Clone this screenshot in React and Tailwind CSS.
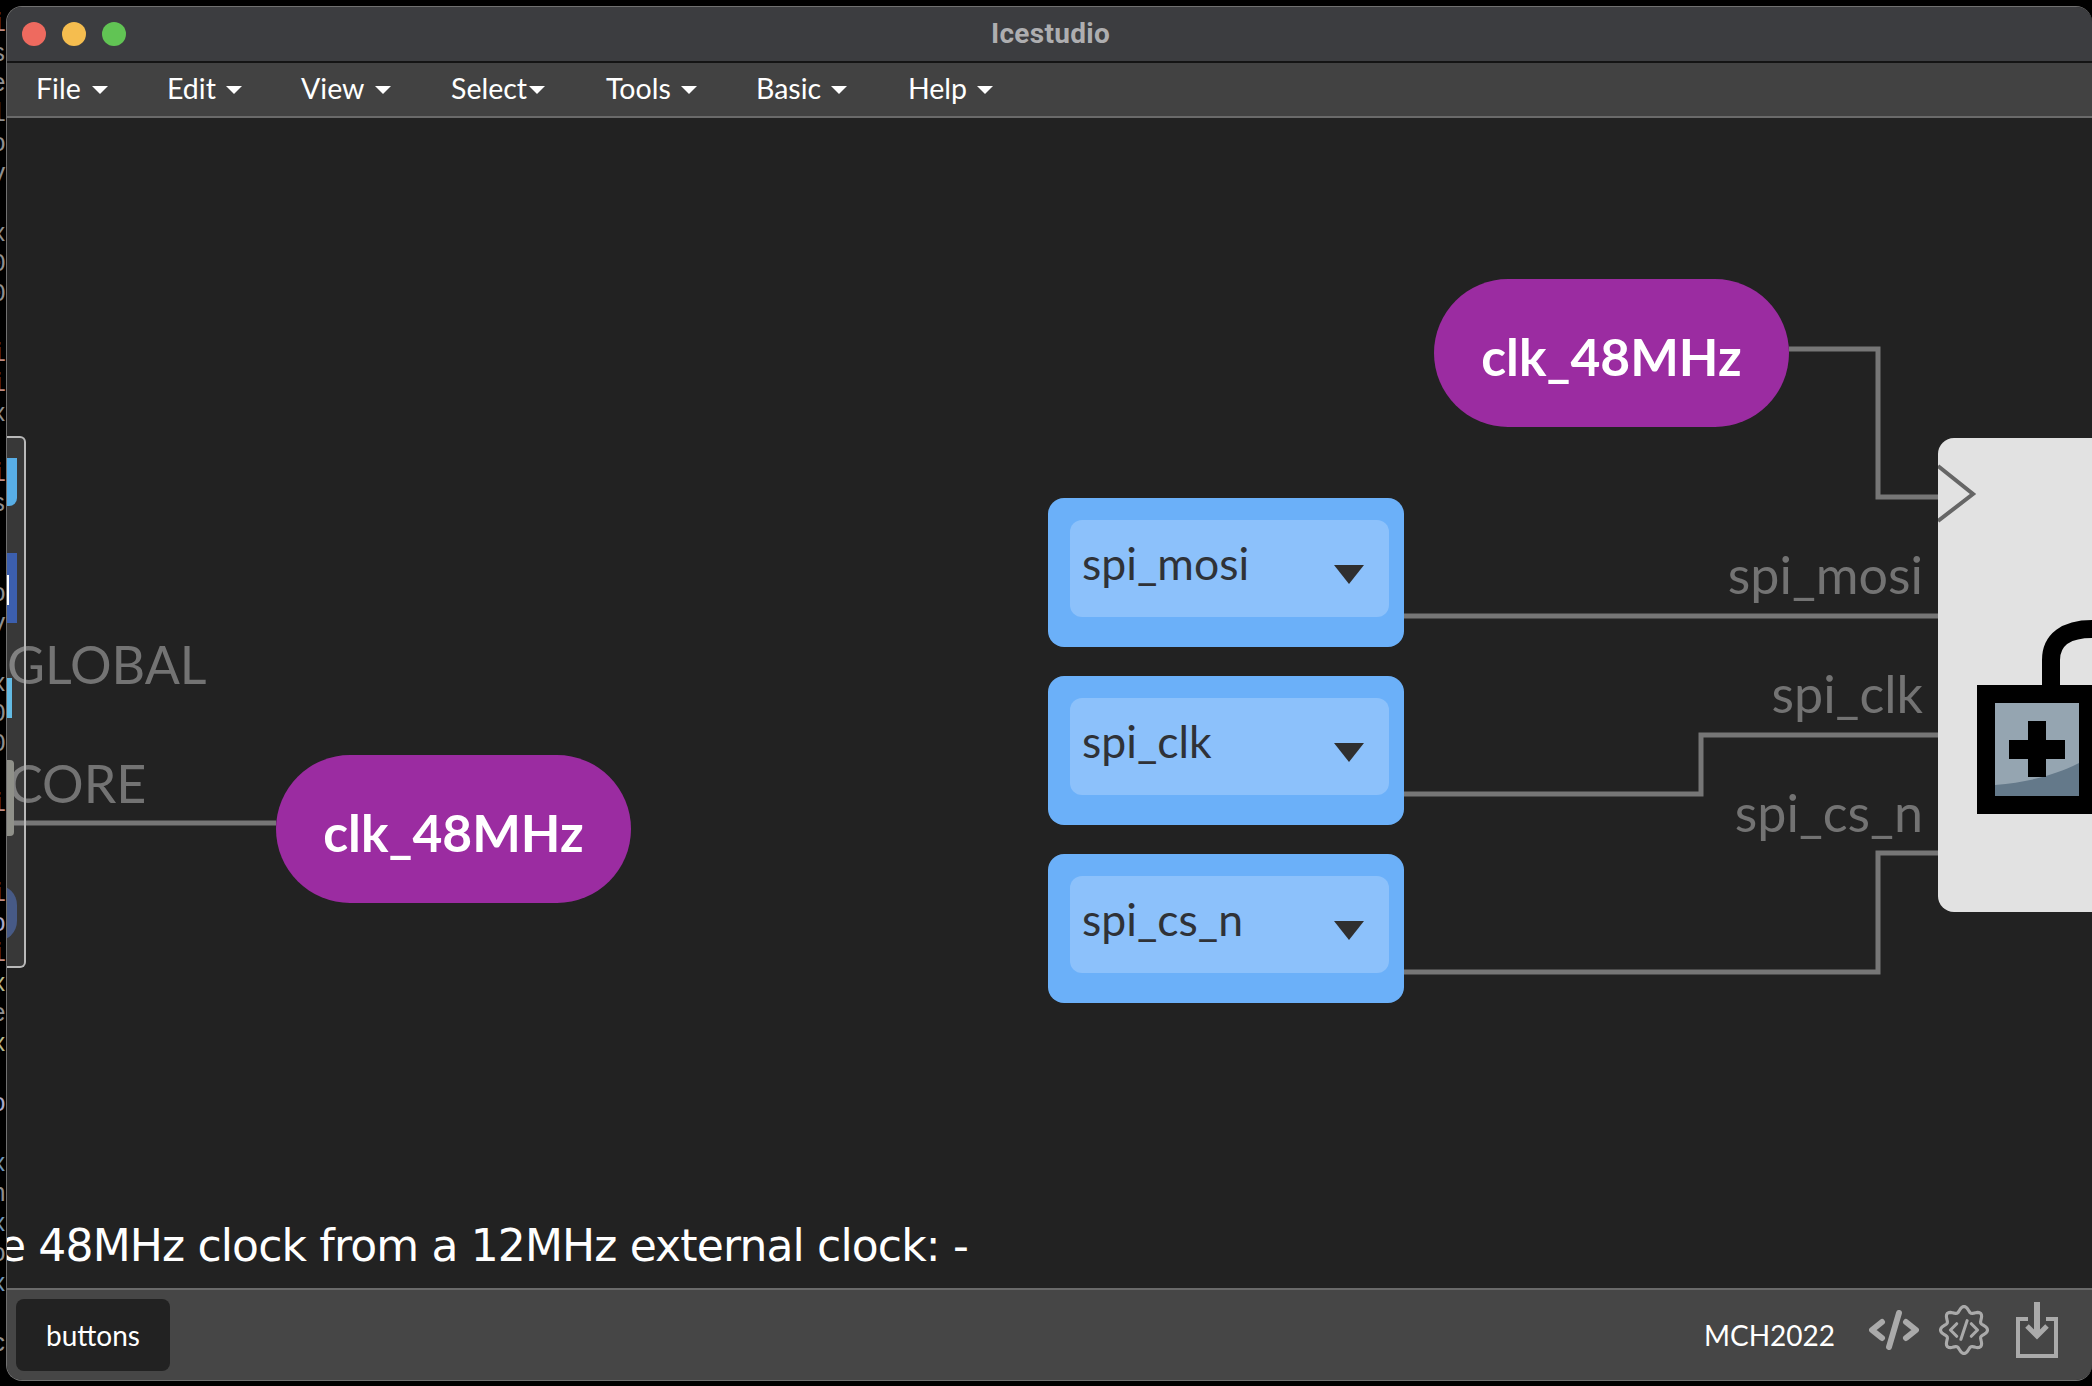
import React from 'react';

const menus = [
  { label: 'File', width: 'w-[131px]', gap: 'ml-[11px]' },
  { label: 'Edit', width: 'w-[134px]', gap: 'ml-[10px]' },
  { label: 'View', width: 'w-[150px]', gap: 'ml-[11px]' },
  { label: 'Select', width: 'w-[155px]', gap: 'ml-[2px]' },
  { label: 'Tools', width: 'w-[150px]', gap: 'ml-[10px]' },
  { label: 'Basic', width: 'w-[152px]', gap: 'ml-[10px]' },
  { label: 'Help', width: 'w-[100px]', gap: 'ml-[10px]' },
];

const inputs = [
  { name: 'spi_mosi', top: 'top-[380px]' },
  { name: 'spi_clk', top: 'top-[558px]' },
  { name: 'spi_cs_n', top: 'top-[736px]' },
];

// what shows of the terminal behind the window, one line per 30px
const termLines = [
  ['i', 'text-[#c08a80]'], ['s', 'text-[#8f8f8f]'], ['e', 'text-[#8f8f8f]'], ['l', 'text-[#8f8f8f]'],
  ['o', 'text-[#8f8f8f]'], ['v', 'text-[#8f8f8f]'], ['', ''], ['x', 'text-[#8f8f8f]'],
  ['0', 'text-[#8f8f8f]'], ['0', 'text-[#8f8f8f]'], ['', ''], ['i', 'text-[#c08a80]'],
  ['i', 'text-[#c08a80]'], ['x', 'text-[#8f8f8f]'], ['', ''], ['i', 'text-[#c08a80]'],
  ['s', 'text-[#8f8f8f]'], ['', ''], ['', ''], ['o', 'text-[#8f8f8f]'],
  ['v', 'text-[#8f8f8f]'], ['', ''], ['x', 'text-[#8f8f8f]'], ['0', 'text-[#8f8f8f]'],
  ['0', 'text-[#8f8f8f]'], ['', ''], ['i', 'text-[#c08a80]'], ['', ''],
  ['', ''], ['i', 'text-[#c08a80]'], ['o', 'text-[#a9a9c9]'], ['i', 'text-[#c08a80]'],
  ['x', 'text-[#b9b98c]'], ['e', 'text-[#8f8f8f]'], ['x', 'text-[#b9b98c]'], ['', ''],
  ['o', 'text-[#a9a9c9]'], ['', ''], ['x', 'text-[#6f95b8]'], ['n', 'text-[#8f8f8f]'],
  ['x', 'text-[#6f95b8]'], ['o', 'text-[#8f8f8f]'], ['x', 'text-[#6f95b8]'], ['', ''],
  ['c', 'text-[#8f8f8f]'], ['', ''],
];

const gearPath = () => {
  const pts = [];
  for (let i = 0; i < 96; i++) {
    const a = (i / 96) * Math.PI * 2;
    const r = 20 + 2.6 * Math.cos(a * 8);
    pts.push(`${(24 + r * Math.sin(a)).toFixed(2)} ${(24 - r * Math.cos(a)).toFixed(2)}`);
  }
  return `M${pts.join('L')}Z`;
};

const Pill = ({ pos }) => (
  <div className={`absolute ${pos} w-[355px] h-[148px] rounded-[74px] bg-[#9b2ca1] flex items-center justify-center pt-[7px]`}>
    <span className="text-white text-[51.5px] font-bold leading-none">clk_48MHz</span>
  </div>
);

const InputBlock = ({ name, top }) => (
  <div className={`absolute left-[1041px] ${top} w-[356px] h-[149px] rounded-[16px] bg-[#6bb0f9] pt-[22px] pl-[22px] pr-[15px]`}>
    <div className="h-[97px] rounded-[12px] bg-[#8cc1fb] pl-[12px] pr-[25px] pt-[21px] flex justify-between">
      <span className="text-[#2f3237] text-[44.5px] leading-none">{name}</span>
      <div className="mt-[24px] w-0 h-0 border-x-[15px] border-x-transparent border-t-[19px] border-t-[#2f2f2f]" />
    </div>
  </div>
);

const Wires = () => (
  <svg className="absolute inset-0" width="2086" height="1170" viewBox="7 118 2086 1170" fill="none" stroke="#767676" strokeWidth="5">
    <path d="M7 823H276" />
    <path d="M1789 349H1878V497H1940" />
    <path d="M1404 616H1940" />
    <path d="M1404 794H1701V735H1940" />
    <path d="M1404 972H1878V853H1940" />
  </svg>
);

const LockBlock = () => (
  <div className="absolute left-[1931px] top-[320px] w-[162px] h-[474px] rounded-l-[16px] bg-[#e2e2e2] overflow-hidden">
    <svg width="162" height="474" viewBox="1938 438 162 474" fill="none">
      <path d="M1938 466L1973 494L1938 521" stroke="#666" strokeWidth="4" />
      <path d="M2051 690V660C2051 640 2066 629 2092 629" stroke="#000" strokeWidth="18" />
      <rect x="1977" y="685" width="130" height="129" fill="#000" />
      <rect x="1995" y="703" width="84" height="93" fill="#95a5b1" />
      <path d="M1995 785C2030 782 2055 775 2079 763V796H1995Z" fill="#64798a" />
      <path d="M2028 721H2046V740H2065V759H2046V777H2028V759H2009V740H2028Z" fill="#000" />
    </svg>
  </div>
);

const Dock = () => (
  <div className="absolute left-0 top-[318px] w-[19px] h-[532px] rounded-r-[6px] border-2 border-l-0 border-[#b9b9b9] bg-white/10 overflow-hidden">
    <div className="absolute top-[20px] left-0 w-[10px] h-[48px] bg-[#58aee6] rounded-br-[8px]" />
    <div className="absolute top-[115px] left-0 w-[10px] h-[70px] bg-[#3c5fae]">
      <div className="mt-[22px] w-[2px] h-[30px] bg-white" />
    </div>
    <div className="absolute top-[240px] left-0 w-[5px] h-[40px] bg-[#63bbe4]" />
    <div className="absolute top-[322px] left-0 w-[7px] h-[76px] rounded-r-[4px] bg-[#8f9089]" />
    <div className="absolute top-[447px] left-[-30px] w-[40px] h-[56px] rounded-full bg-[#475a86]" />
  </div>
);

export default function App() {
  return (
    <div className="relative w-[2092px] h-[1386px] bg-black overflow-hidden pl-[6px] pt-[6px] font-['Lato',sans-serif]">
      <div className="absolute left-0 top-[10px] w-[6px] overflow-hidden flex flex-col items-end font-['Liberation_Mono',monospace] text-[25px]">
        {termLines.map(([ch, color], i) => (
          <div key={i} className={`h-[30px] w-[15px] shrink-0 leading-[30px] text-center ${color}`}>{ch}</div>
        ))}
      </div>

      <div className="relative w-[2086px] h-[1375px] rounded-[16px] overflow-hidden flex flex-col bg-[#222222] border-t border-l border-b border-[#707070]">
        <div className="h-[56px] shrink-0 bg-[#3c3d40] border-b-2 border-[#141414] relative flex items-center justify-center">
          <div className="absolute left-[15px] top-[15px] flex gap-[16px]">
            <div className="w-[24px] h-[24px] rounded-full bg-[#ee6a5f]" />
            <div className="w-[24px] h-[24px] rounded-full bg-[#f5bd4f]" />
            <div className="w-[24px] h-[24px] rounded-full bg-[#61c454]" />
          </div>
          <span className="ml-[2px] text-[#aeaeb0] text-[28px] font-bold tracking-[0.3px] font-['Roboto',sans-serif]">Icestudio</span>
        </div>

        <div className="h-[55px] shrink-0 bg-[#424242] border-b-2 border-[#6a6a6a] pl-[29px] pb-[2px] flex items-center">
          {menus.map((m) => (
            <div key={m.label} className={`${m.width} flex items-center text-white text-[28.5px]`}>
              <span>{m.label}</span>
              <div className={`${m.gap} mt-[3px] w-0 h-0 border-x-[8px] border-x-transparent border-t-[8px] border-t-white`} />
            </div>
          ))}
        </div>

        <div className="relative flex-1 overflow-hidden">
          <Wires />
          <span className="absolute left-0 top-[520px] text-[#737373] text-[52px] leading-none">GLOBAL</span>
          <span className="absolute left-[1px] top-[639px] text-[#737373] text-[52px] leading-none">CORE</span>
          <Pill pos="left-[269px] top-[637px]" />
          <Pill pos="left-[1427px] top-[161px]" />
          {inputs.map((b) => (
            <InputBlock key={b.name} name={b.name} top={b.top} />
          ))}
          <span className="absolute right-[169px] top-[430px] text-[#737373] text-[52px] leading-none">spi_mosi</span>
          <span className="absolute right-[169px] top-[549px] text-[#737373] text-[52px] leading-none">spi_clk</span>
          <span className="absolute right-[169px] top-[668px] text-[#737373] text-[52px] leading-none">spi_cs_n</span>
          <LockBlock />
          <span className="absolute left-[-8px] top-[1106px] whitespace-nowrap text-white text-[44px] tracking-[-0.85px] leading-none font-['DejaVu_Sans',sans-serif]">e 48MHz clock from a 12MHz external clock: -</span>
          <Dock />
        </div>

        <div className="h-[92px] shrink-0 bg-[#464646] border-t-2 border-[#6a6a6a] pl-[9px] pr-[34px] flex items-center justify-between">
          <div className="w-[154px] h-[72px] rounded-[8px] bg-[#222222] flex items-center justify-center text-white text-[28px]">buttons</div>
          <div className="flex items-center">
            <span className="text-white text-[28px] mr-[34px]">MCH2022</span>
            <div className="flex items-center mb-[10px]">
              <svg width="50" height="40" viewBox="0 0 50 40" fill="none" stroke="#aaaaaa" strokeWidth="6" strokeLinecap="round" strokeLinejoin="round" className="mr-[20px]">
                <path d="M13 12L3 20L13 28" />
                <path d="M37 12L47 20L37 28" />
                <path d="M30 3L20 37" />
              </svg>
              <svg width="50" height="50" viewBox="0 0 48 48" fill="none" stroke="#aaaaaa" className="mr-[27px]">
                <path d={gearPath()} strokeWidth="3" strokeLinejoin="round" />
                <path d="M17 18L11 24L17 30M31 18L37 24L31 30M27 15L21 33" strokeWidth="3" strokeLinecap="round" strokeLinejoin="round" />
              </svg>
              <svg width="42" height="56" viewBox="0 0 42 56" fill="none" stroke="#aaaaaa" strokeWidth="4">
                <path d="M12 17H2V54H40V17H30" />
                <path d="M21 0V32" strokeWidth="6" />
                <path d="M11 24L21 34L31 24" strokeWidth="5" />
              </svg>
            </div>
          </div>
        </div>
      </div>
    </div>
  );
}
